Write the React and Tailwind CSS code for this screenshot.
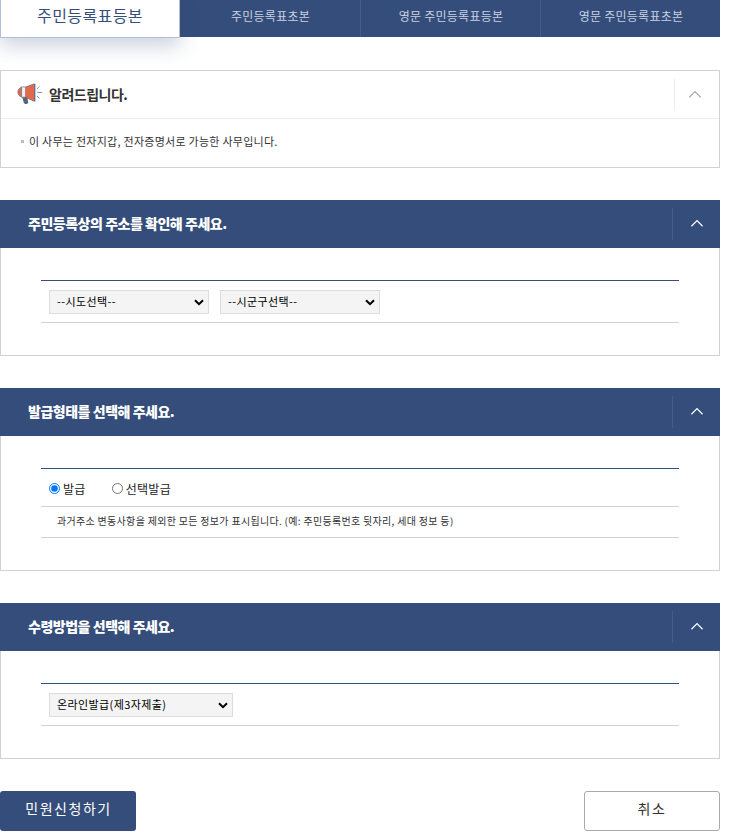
import React, { useState } from 'react';

const tabs = ['주민등록표초본', '영문 주민등록표등본', '영문 주민등록표초본'];

const Chevron = ({ className }) => (
  <svg width="12" height="8" viewBox="0 0 12 8" fill="none" className={className} aria-hidden="true">
    <path d="M0.4 7.2L6 1.6L11.6 7.2" stroke="currentColor" strokeWidth="1.3" />
  </svg>
);

const Megaphone = () => (
  <svg width="26" height="22" viewBox="0 0 26 22" className="-mt-px" aria-hidden="true">
    <path d="M5 13.5h5.2l1 6.2c-.8 1.5-3 1.7-4.2.6z" fill="#56657c" />
    <path d="M4.8 4.2C2 4.8.8 7 .9 9.2c.1 2.4 1.5 4.3 3.9 4.8z" fill="#e2694a" stroke="#8a6068" strokeWidth=".7" />
    <path d="M4.6 3.9h4v10.3h-4z" fill="#f1f3f7" stroke="#66738a" strokeWidth=".7" />
    <path d="M8.4 4.2L17 1v17l-8.6-3.8z" fill="#e2694a" />
    <path d="M8.4 4.2L17 .9M8.4 14.2L17 18.1" stroke="#8a6068" strokeWidth=".8" />
    <path d="M17 .8h1.4v17.8H17z" fill="#66738a" />
    <path d="M20 6l2.4-2.6M20.4 9.5h4.8M20 13l2.4 2.6" stroke="#8c96a6" strokeWidth="1" fill="none" />
  </svg>
);

const Select = ({ options, className }) => (
  <div className={`relative h-6 ${className}`}>
    <select className="block h-6 w-full appearance-none border border-[#dcdcdc] bg-[#f4f4f4] pb-px pl-[7px] text-[11px] leading-[21px] tracking-[0.4px] text-black">
      {options.map((option) => (
        <option key={option}>{option}</option>
      ))}
    </select>
    <svg width="10" height="7" viewBox="0 0 10 7" fill="none" className="pointer-events-none absolute top-[9px] right-[5px]">
      <path d="M1 1.2L5 5.2L9 1.2" stroke="#000" strokeWidth="2" />
    </svg>
  </div>
);

const Section = ({ title, children }) => (
  <section className="mb-8">
    <div className="flex h-12 items-center justify-between bg-[#344d7a] pl-7">
      <h2 className="pb-0.5 text-[14px] leading-5 font-black tracking-[-0.48px] whitespace-nowrap text-white">{title}</h2>
      <button className="flex h-8 w-12 items-center justify-center border-l border-[#465d87] text-white" aria-label="접기">
        <Chevron className="-mt-0.5" />
      </button>
    </div>
    <div className="border border-t-0 border-[#d2d2d2] px-10 py-8">
      <div className="border-t border-[#344d7a]">{children}</div>
    </div>
  </section>
);

const Radio = ({ label, checked, onChange }) => (
  <label className="flex items-center gap-[3px]">
    <input
      type="radio"
      name="issue"
      checked={checked}
      onChange={onChange}
      className="h-[11px] w-[11px] accent-[#0075ff]"
    />
    <span className="text-xs tracking-[0.3px] text-[#222]">{label}</span>
  </label>
);

export default function App() {
  const [issue, setIssue] = useState('all');

  return (
    <div className="h-[835px] w-[735px] overflow-hidden bg-white font-['Noto_Sans_CJK_KR',sans-serif]">
      <div className="w-[720px]">
        <nav className="mb-[33px] flex h-[37px] bg-[#344d7a]">
          <button className="h-[38px] w-[180px] shrink-0 border border-t-0 border-[#b4bedb] bg-white pb-[7px] text-base leading-6 tracking-[0.4px] text-[#344d7a] shadow-[0_8px_20px_rgba(52,77,122,0.25)]">
            주민등록표등본
          </button>
          {tabs.map((tab) => (
            <button key={tab} className="w-[180px] border-r border-[#465d87] pb-[5px] pl-px text-[12px] tracking-[0.25px] text-[#c8d1e2] last:w-[179px] last:border-r-0 nth-2:w-[181px]">
              {tab}
            </button>
          ))}
        </nav>

        {/* 안내 */}
        <section className="mb-8 h-[98px] border border-[#d2d2d2]">
          <div className="flex h-12 items-center border-b border-[#ebebeb] pl-4">
            <Megaphone />
            <h2 className="ml-1.5 flex-1 pb-0.5 text-[14px] leading-5 font-bold tracking-[-0.5px] text-[#333]">알려드립니다.</h2>
            <button className="flex h-8 w-[45px] items-center justify-center border-l border-[#ebebeb] pr-1 text-[#aaa]" aria-label="접기">
              <Chevron className="-mt-0.5" />
            </button>
          </div>
          <p className="flex h-[45px] items-center gap-[5px] pl-5 text-[11px] tracking-[0.26px] text-[#333]">
            <span className="h-[3px] w-[3px] bg-[#bbb]" />
            이 사무는 전자지갑, 전자증명서로 가능한 사무입니다.
          </p>
        </section>

        <Section title="주민등록상의 주소를 확인해 주세요.">
          <div className="flex h-[42px] gap-[11px] border-b border-[#d2d2d2] px-2 pt-[9px]">
            <Select className="w-40" options={['--시도선택--']} />
            <Select className="w-40" options={['--시군구선택--']} />
          </div>
        </Section>

        <Section title="발급형태를 선택해 주세요.">
          <div className="flex h-[38px] items-center gap-[26px] border-b border-[#d2d2d2] px-2 pt-0.5">
            <Radio label="발급" checked={issue === 'all'} onChange={() => setIssue('all')} />
            <Radio label="선택발급" checked={issue === 'select'} onChange={() => setIssue('select')} />
          </div>
          <p className="h-[31px] border-b border-[#d2d2d2] pl-4 text-[10px] leading-[28px] tracking-[0.31px] text-[#333]">
            과거주소 변동사항을 제외한 모든 정보가 표시됩니다. (예: 주민등록번호 뒷자리, 세대 정보 등)
          </p>
        </Section>

        <Section title="수령방법을 선택해 주세요.">
          <div className="h-[42px] border-b border-[#d2d2d2] px-2 pt-[9px]">
            <Select className="w-[184px]" options={['온라인발급(제3자제출)']} />
          </div>
        </Section>

        <div className="flex justify-between">
          <button className="h-10 w-[136px] rounded-[3px] bg-[#344d7a] pb-[6px] pl-px text-sm tracking-[1.5px] text-white">
            민원신청하기
          </button>
          <button className="h-10 w-[136px] rounded-[3px] border border-[#aaa] bg-white pb-[6px] text-sm tracking-[1.5px] text-[#333]">
            취소
          </button>
        </div>
      </div>
    </div>
  );
}
